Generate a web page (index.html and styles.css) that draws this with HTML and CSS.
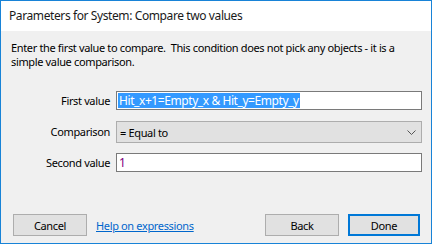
FILE: index.html
```html
<!DOCTYPE html>
<html>
<head>
<meta charset="utf-8">
<link rel="stylesheet" href="styles.css">
</head>
<body>
<div class="window">
  <div class="titlebar">Parameters for System: Compare two values</div>
  <div class="content">
    <p class="desc">Enter the first value to compare.&nbsp; This condition does not pick any objects - it is a<br>simple value comparison.</p>
    <div class="form">
      <label class="lbl lbl-first">First value</label>
      <div class="edit edit-first"><span class="sel">Hit_x+1=Empty_x &amp; Hit_y=Empty_y</span></div>
      <label class="lbl lbl-cmp">Comparison</label>
      <div class="combo"><span>= Equal to</span>
        <svg class="chev" width="9" height="5" viewBox="0 0 9 5"><path d="M0.5 0.5 L4.5 4.5 L8.5 0.5" fill="none" stroke="#555" stroke-width="1"/></svg>
      </div>
      <label class="lbl lbl-second">Second value</label>
      <div class="edit edit-second"><span class="num">1</span></div>
    </div>
    <div class="buttons">
      <button class="btn">Cancel</button>
      <a class="help" href="#">Help on expressions</a>
      <span class="spacer"></span>
      <button class="btn">Back</button>
      <button class="btn btn-default">Done</button>
    </div>
  </div>
</div>
</body>
</html>
```
FILE: styles.css
```css
html, body {
  margin: 0;
  padding: 0;
  background: #ffffff;
}
body {
  font-family: "Noto Sans", "Open Sans", sans-serif;
  font-size: 11px;
  letter-spacing: -0.35px;
  color: #000;
}
.window {
  width: 432px;
  height: 244px;
  box-sizing: border-box;
  border: 1px solid #1883d7;
  display: flex;
  flex-direction: column;
}
.titlebar {
  height: 30px;
  line-height: 30px;
  padding-left: 8px;
  background: #ffffff;
  color: #1a1a1a;
  font-size: 12px;
  letter-spacing: -0.4px;
}
.content {
  flex: 1;
  background: #f0f0f0;
  display: flex;
  flex-direction: column;
  padding: 0 9px 0 10px;
}
.desc {
  margin: 10px 0 0 0;
  line-height: 14px;
  white-space: nowrap;
}
.form {
  display: grid;
  grid-template-columns: 99px 306px;
  column-gap: 6px;
  margin-top: 22px;
  align-items: center;
}
.lbl {
  text-align: right;
  white-space: nowrap;
}
.edit {
  height: 19px;
  box-sizing: border-box;
  border: 1px solid #7a7a7a;
  background: #fff;
  padding: 1px 1px;
  line-height: 15px;
  font-size: 12px;
  letter-spacing: -0.42px;
  overflow: hidden;
  white-space: nowrap;
}
.sel {
  display: inline-block;
  background: #3399ff;
  color: #fff;
  line-height: 15px;
  padding: 0 1px;
}
.combo {
  height: 22px;
  box-sizing: border-box;
  border: 1px solid #adadad;
  background: #e1e1e1;
  margin: 11px 0 10px 0;
  display: flex;
  align-items: center;
  justify-content: space-between;
  padding: 0 5px 0 3px;
}
.chev {
  display: block;
}
.num {
  color: #800080;
  padding-left: 1px;
}
.buttons {
  margin-top: auto;
  margin-bottom: 7px;
  display: flex;
  align-items: center;
  padding: 0 2px 0 2px;
}
.btn {
  font-family: inherit;
  font-size: 11px;
  letter-spacing: -0.35px;
  width: 74px;
  height: 22px;
  box-sizing: border-box;
  background: #e1e1e1;
  border: 1px solid #adadad;
  color: #000;
  padding: 0;
  margin: 0;
}
.btn-default {
  border: 2px solid #0078d7;
  margin-left: 9px;
  width: 72px;
}
.help {
  color: #0066cc;
  text-decoration: underline;
  margin-left: 9px;
}
.spacer {
  flex: 1;
}
```
